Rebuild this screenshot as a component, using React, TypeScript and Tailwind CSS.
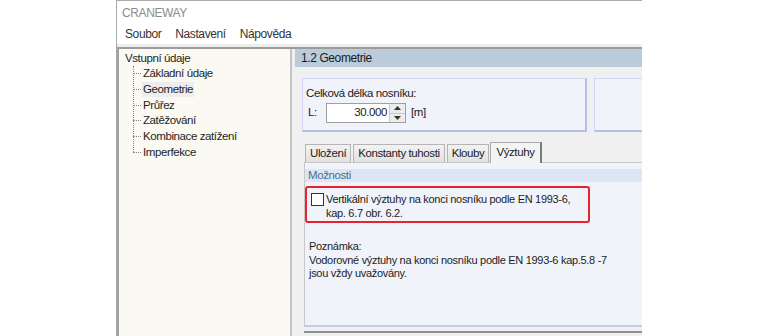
import React from "react";

const ui = "font-['Liberation_Sans',Arial,sans-serif] tracking-[-0.4px]";
const classic = "font-['Liberation_Sans',Arial,sans-serif] tracking-[-0.3px]";

const treeItems = [
  "Základní údaje",
  "Geometrie",
  "Průřez",
  "Zatěžování",
  "Kombinace zatížení",
  "Imperfekce",
];

function Tab({ label, active }: { label: string; active?: boolean }) {
  if (active) {
    return (
      <div className="relative z-10 -mb-[1px] ml-[1px] flex h-[21px] items-center border border-b-0 border-[#a8a8a8] border-r-[#7c7c7c] border-r-2 bg-[#f4f4f4] px-[5px] text-[11.5px] text-[#222]">
        {label}
      </div>
    );
  }
  return (
    <div className="ml-[2px] flex h-[18px] items-center border border-b-0 border-[#b4b4b4] bg-gradient-to-b from-[#f2f2f2] to-[#e2e2e2] px-[4px] text-[11.5px] text-[#222] first:ml-0">
      {label}
    </div>
  );
}

export default function App() {
  return (
    <div className={`flex h-[336px] w-[760px] overflow-hidden bg-white ${ui}`}>
      <div className="ml-[116px] flex w-[526px] flex-col border-l border-t border-[#a9a9a9]">
        {/* Title */}
        <div className="flex h-[23px] items-center pl-[5px] text-[12px] text-[#8c8c8c]">
          CRANEWAY
        </div>
        {/* Menu */}
        <div className="flex h-[20px] items-center gap-[14px] pl-[8px] text-[12px] text-[#333]">
          <span>Soubor</span>
          <span>Nastavení</span>
          <span>Nápověda</span>
        </div>
        <div className="h-[3px] bg-[#eeeeee]" />
        <div className="h-[2px] bg-[#9c9c9c]" />

        {/* Body */}
        <div className="flex flex-1">
          {/* Tree */}
          <div className="w-[173px] border-l-2 border-[#a2a2a2] bg-[#faf9f2] pl-[6px] pt-[2px] text-[11.5px] text-[#1e1e1e]">
            <div className="h-[15px] leading-[15px]">Vstupní údaje</div>
            <div className="relative ml-[8px]">
              <div className="absolute left-0 top-0 h-[86px] border-l border-dotted border-[#8a8a8a]" />
              {treeItems.map((t) => (
                <div key={t} className="flex h-[15.7px] items-center">
                  <div className="w-[8px] border-t border-dotted border-[#8a8a8a]" />
                  <span
                    className={`ml-[1px] px-[1px] leading-[15px] ${
                      t === "Geometrie" ? "bg-[#ededed]" : ""
                    }`}
                  >
                    {t}
                  </span>
                </div>
              ))}
            </div>
          </div>
          <div className="w-[2px] bg-[#c4c4c4]" />

          {/* Right area */}
          <div className="flex flex-1 flex-col bg-[#f0f0f0] pl-[3px]">
            <div className="flex h-[18px] items-center bg-[#bccbd9] pl-[6px] text-[12px] text-[#1a1a1a]">
              1.2 Geometrie
            </div>

            <div className="ml-[7px] mt-[11px] flex h-[54px] gap-[7px]">
              <div className="w-[285px] border border-[#d2d6f2] border-b-2 border-r-2 border-b-[#b9bdea] border-r-[#b9bdea] bg-[#f1f3fa] pl-[3px] pt-[6px] text-[11.5px] text-[#1a1a1a]">
                <div className="leading-[16px]">Celková délka nosníku:</div>
                <div className="mt-[2px] flex items-center">
                  <span className="w-[20px] pl-[2px]">L:</span>
                  <div className="flex h-[20px] w-[80px] border border-[#a0a0a0] bg-white">
                    <div className="flex flex-1 items-center justify-end pr-[2px]">
                      30.000
                    </div>
                    <div className="flex w-[16px] flex-col border-l border-[#c8c8c8] bg-[#ececec]">
                      <div className="flex flex-1 items-center justify-center border-b border-[#c8c8c8]">
                        <svg width="7" height="4" viewBox="0 0 7 4">
                          <path d="M0 4 L3.5 0 L7 4 Z" fill="#333" />
                        </svg>
                      </div>
                      <div className="flex flex-1 items-center justify-center">
                        <svg width="7" height="4" viewBox="0 0 7 4">
                          <path d="M0 0 L3.5 4 L7 0 Z" fill="#333" />
                        </svg>
                      </div>
                    </div>
                  </div>
                  <span className="ml-[5px]">[m]</span>
                </div>
              </div>
              <div className="flex-1 border border-r-0 border-[#d2d6f2] border-b-2 border-b-[#b9bdea] bg-[#f1f3fa]" />
            </div>

            {/* Tabs */}
            <div className="ml-[10px] mt-[9px] flex h-[21px] items-end">
              <Tab label="Uložení" />
              <Tab label="Konstanty tuhosti" />
              <Tab label="Klouby" />
              <Tab label="Výztuhy" active />
            </div>

            {/* Tab panel */}
            <div className="ml-[9px] flex h-[165px] flex-col border-l border-t border-[#c8c8c8] border-b-2 border-b-[#c6c9ee] bg-[#f0f3fa]">
              <div className="mt-[6px] flex h-[13px] items-center bg-[#dde6f3] pl-[3px] text-[11.5px] text-[#4d6c98]">
                Možnosti
              </div>
              <div
                className={`mt-[4px] flex h-[37px] w-[285px] rounded-[3px] border-[2.5px] border-[#e8232e] pl-[4px] pt-[4px] text-[11px] leading-[14px] text-[#1c1c1c] ${classic}`}
              >
                <div className="mr-[2px] mt-[1px] h-[13px] w-[13px] shrink-0 border border-[#333] bg-white" />
                <div>
                  Vertikální výztuhy na konci nosníku podle EN 1993-6,
                  <br />
                  kap. 6.7 obr. 6.2.
                </div>
              </div>
              <div
                className={`ml-[4px] mt-[17px] text-[11px] leading-[13.5px] text-[#1c1c1c] ${classic}`}
              >
                Poznámka:
                <br />
                Vodorovné výztuhy na konci nosníku podle EN 1993-6 kap.5.8 -7
                <br />
                jsou vždy uvažovány.
              </div>
            </div>
            <div className="ml-[9px] mt-[4px] h-[2px] bg-[#8e8e8e]" />
          </div>
        </div>
      </div>
    </div>
  );
}
